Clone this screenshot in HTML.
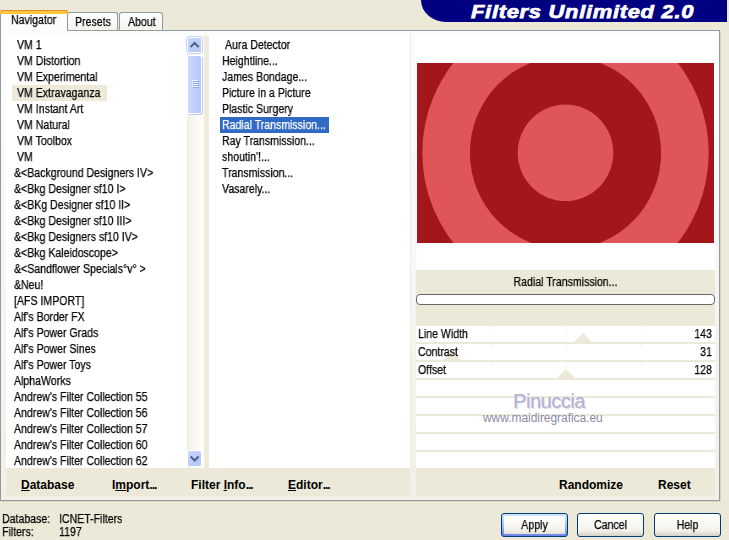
<!DOCTYPE html>
<html><head><meta charset="utf-8">
<style>
*{box-sizing:border-box;margin:0;padding:0}
html,body{width:729px;height:540px;overflow:hidden;background:#ece9d8;font-family:"Liberation Sans",sans-serif;font-size:12.5px;color:#000}
.abs{position:absolute}
.t{position:absolute;display:block;white-space:nowrap;font-size:12.5px;line-height:16px;height:16px;transform:scaleX(0.845);transform-origin:0 0;will-change:transform;-webkit-text-stroke:.25px}
.tr{transform-origin:100% 0}
.tc{transform-origin:50% 0;text-align:center}
#panel{position:absolute;left:0;top:30px;width:720px;height:471px;background:linear-gradient(#fcfcfe,#fcfcfe 8%,#f1efe6);border:1px solid #919b9c;box-shadow:1px 1px 0 #d8d5c5}
.tab{position:absolute;background:linear-gradient(#fefefe,#f4f3ee);border:1px solid #919b9c;border-bottom:none;border-radius:3px 3px 0 0}
#t1{left:0;top:10px;width:68px;height:21px;background:#fcfcfe;border-top:none;z-index:3}
#t1:before{content:"";position:absolute;left:-1px;right:-1px;top:0;height:3px;background:#ffc73c;border-top:1px solid #e68b2c;border-radius:3px 3px 0 0}
#t2{left:67px;top:12px;width:51px;height:18px}
#t3{left:119px;top:12px;width:44px;height:18px}
#banner{position:absolute;left:421px;top:0;width:306px;height:22px;background:#000080;border-bottom-left-radius:25px 22px;color:#fff}
#banner span{position:absolute;left:50px;top:0.5px;-webkit-text-stroke:.75px #fff;font-weight:bold;font-style:italic;font-size:19px;line-height:22px;white-space:nowrap;display:block;transform-origin:0 50%;transform:scaleX(1.155);letter-spacing:.6px}
.white{position:absolute;background:#fff}
.beige{position:absolute;background:#ece9d8}
.b{font-weight:bold;font-size:12px;line-height:14px;position:absolute;top:478px;white-space:nowrap}
.b i{font-style:normal;letter-spacing:-1px}
.btn{position:absolute;top:513px;height:24px;width:67px;border:1px solid #003c74;border-radius:3px;background:linear-gradient(#fff,#f3f2ea 75%,#d6d0c5)}
.row{position:absolute;left:416px;width:299px;height:16px;background:#fff}
.tk{position:absolute;top:0;width:1px;height:4px;background:#ece9d8;opacity:.45}
.tri{position:absolute;width:0;height:0;border-left:9px solid transparent;border-right:9px solid transparent;border-bottom:9px solid #ece9d8;top:7px}
</style></head><body>
<div id="banner"><span>Filters Unlimited 2.0</span></div>
<div id="panel"></div>
<div class="tab" id="t1"><span class="t" style="left:10px;top:2px">Navigator</span></div>
<div class="tab" id="t2"><span class="t" style="left:7px;top:1px">Presets</span></div>
<div class="tab" id="t3"><span class="t" style="left:8px;top:1px">About</span></div>

<div class="white" style="left:6px;top:36px;width:182px;height:432px;overflow:hidden">
<div class="beige" style="left:6px;top:49px;width:95px;height:16px"></div>
<span class="t" style="left:11px;top:1px">VM 1</span>
<span class="t" style="left:11px;top:17px">VM Distortion</span>
<span class="t" style="left:11px;top:33px">VM Experimental</span>
<span class="t" style="left:11px;top:49px">VM Extravaganza</span>
<span class="t" style="left:11px;top:65px">VM Instant Art</span>
<span class="t" style="left:11px;top:81px">VM Natural</span>
<span class="t" style="left:11px;top:97px">VM Toolbox</span>
<span class="t" style="left:11px;top:113px">VM</span>
<span class="t" style="left:8px;top:129px">&amp;&lt;Background Designers IV&gt;</span>
<span class="t" style="left:8px;top:145px">&amp;&lt;Bkg Designer sf10 I&gt;</span>
<span class="t" style="left:8px;top:161px">&amp;&lt;BKg Designer sf10 II&gt;</span>
<span class="t" style="left:8px;top:177px">&amp;&lt;Bkg Designer sf10 III&gt;</span>
<span class="t" style="left:8px;top:193px">&amp;&lt;Bkg Designers sf10 IV&gt;</span>
<span class="t" style="left:8px;top:209px">&amp;&lt;Bkg Kaleidoscope&gt;</span>
<span class="t" style="left:8px;top:225px">&amp;&lt;Sandflower Specials°v° &gt;</span>
<span class="t" style="left:8px;top:241px">&amp;Neu!</span>
<span class="t" style="left:8px;top:257px">[AFS IMPORT]</span>
<span class="t" style="left:8px;top:273px">Alf's Border FX</span>
<span class="t" style="left:8px;top:289px">Alf's Power Grads</span>
<span class="t" style="left:8px;top:305px">Alf's Power Sines</span>
<span class="t" style="left:8px;top:321px">Alf's Power Toys</span>
<span class="t" style="left:8px;top:337px">AlphaWorks</span>
<span class="t" style="left:8px;top:353px">Andrew's Filter Collection 55</span>
<span class="t" style="left:8px;top:369px">Andrew's Filter Collection 56</span>
<span class="t" style="left:8px;top:385px">Andrew's Filter Collection 57</span>
<span class="t" style="left:8px;top:401px">Andrew's Filter Collection 60</span>
<span class="t" style="left:8px;top:417px">Andrew's Filter Collection 62</span>
</div>
<div class="abs" style="left:187px;top:36px;width:17px;height:432px;background:linear-gradient(90deg,#efeee6,#f8f7f3 40%,#fefefc)"></div>
<div class="abs" style="left:187px;top:36px;width:17px;height:18px"><div class="abs" style="left:1px;top:2px;width:13px;height:14px;border-radius:2px;background:linear-gradient(135deg,#c9d7fc,#b3c5f6);box-shadow:0 0 0 1px #fff,0 0 0 2px #c7d3f6"></div>
<svg class="abs" style="left:0;top:0" width="17" height="18" viewBox="0 0 17 18"><path d="M3.6 11 L7.6 7 L11.6 11" fill="none" stroke="#4d6185" stroke-width="2"/></svg></div>
<div class="abs" style="left:187px;top:55px;width:17px;height:59px"><div class="abs" style="left:1px;top:1px;width:13px;height:57px;border-radius:2px;background:linear-gradient(90deg,#cbd8fd,#c0cffa 50%,#b7c8f8);box-shadow:0 0 0 1px #fff,1px 1px 0 1px #b9c8f3"></div>
<div class="abs" style="left:5px;top:25px;width:6px;height:1px;background:#f2f6ff;box-shadow:0 2px 0 #f2f6ff,0 4px 0 #f2f6ff,0 6px 0 #f2f6ff,1px 1px 0 #8fa8ea,1px 3px 0 #8fa8ea,1px 5px 0 #8fa8ea,1px 7px 0 #8fa8ea"></div></div>
<div class="abs" style="left:187px;top:449px;width:17px;height:18px"><div class="abs" style="left:1px;top:2px;width:13px;height:15px;border-radius:2px;background:linear-gradient(135deg,#c9d7fc,#b3c5f6);box-shadow:0 0 0 1px #fff,0 1px 0 0 #8ea8ea"></div>
<svg class="abs" style="left:0;top:0" width="17" height="18" viewBox="0 0 17 18"><path d="M3.6 7.5 L7.6 11.5 L11.6 7.5" fill="none" stroke="#4d6185" stroke-width="2"/></svg></div>
<div class="beige" style="left:204px;top:36px;width:5px;height:432px;background:#eeebdd"></div>

<div class="white" style="left:209px;top:36px;width:201px;height:432px;overflow:hidden">
<div class="abs" style="left:11px;top:81px;width:109px;height:16px;background:#316ac5"></div>
<span class="t" style="left:16px;top:1px">Aura Detector</span>
<span class="t" style="left:13px;top:17px">Heightline...</span>
<span class="t" style="left:13px;top:33px">James Bondage...</span>
<span class="t" style="left:13px;top:49px">Picture in a Picture</span>
<span class="t" style="left:13px;top:65px">Plastic Surgery</span>
<span class="t" style="left:13px;top:81px;color:#fff">Radial Transmission...</span>
<span class="t" style="left:13px;top:97px">Ray Transmission...</span>
<span class="t" style="left:13px;top:113px">shoutin'!...</span>
<span class="t" style="left:13px;top:129px">Transmission...</span>
<span class="t" style="left:13px;top:145px">Vasarely...</span>
</div>
<div class="abs" style="left:410px;top:33px;width:1px;height:436px;background:#eeecdf"></div>
<div class="white" style="left:416px;top:36px;width:299px;height:234px"></div>
<svg class="abs" style="left:417px;top:63px" width="297" height="180" viewBox="0 0 297 180"><rect width="297" height="180" fill="#a3161a"/><ellipse cx="148.5" cy="89.8" rx="143.2" ry="144.6" fill="#e05558"/><ellipse cx="148.5" cy="89.8" rx="95.6" ry="96.5" fill="#a3161a"/><ellipse cx="148.5" cy="89.8" rx="47.8" ry="48.3" fill="#e05558"/></svg>
<div class="beige" style="left:416px;top:270px;width:299px;height:200px"></div>
<span class="t tc" style="left:416px;width:299px;top:274px">Radial Transmission...</span>
<div class="abs" style="left:416px;top:294px;width:299px;height:11px;background:#fff;border:1px solid #686868;border-radius:4px"></div>

<div class="row" style="top:326px">
<div class="tri" style="left:158.4px"></div>
<div class="tk" style="left:76px"></div><div class="tk" style="left:150px;height:7px"></div><div class="tk" style="left:225px"></div>
<span class="t" style="left:2px;top:0">Line Width</span><span class="t tr" style="right:3px;top:0">143</span>
</div>
<div class="row" style="top:344px">
<div class="tri" style="left:26.7px"></div>
<div class="tk" style="left:76px"></div><div class="tk" style="left:150px;height:7px"></div><div class="tk" style="left:225px"></div>
<span class="t" style="left:2px;top:0">Contrast</span><span class="t tr" style="right:3px;top:0">31</span>
</div>
<div class="row" style="top:362px">
<div class="tri" style="left:141.0px"></div>
<div class="tk" style="left:76px"></div><div class="tk" style="left:150px;height:7px"></div><div class="tk" style="left:225px"></div>
<span class="t" style="left:2px;top:0">Offset</span><span class="t tr" style="right:3px;top:0">128</span>
</div>
<div class="row" style="top:380px">
</div>
<div class="row" style="top:398px">
</div>
<div class="row" style="top:416px">
</div>
<div class="row" style="top:434px">
</div>
<div class="row" style="top:452px">
</div>
<div class="abs" style="left:513px;top:389px;white-space:nowrap;font-size:20px;line-height:24px;color:#b3b1d0;letter-spacing:-.45px;text-shadow:1px 1px 0 #dddced">Pinuccia</div>
<div class="abs" style="left:483px;top:411px;white-space:nowrap;font-size:12px;line-height:14px;color:#8d8ba6;letter-spacing:-.05px">www.maidiregrafica.eu</div>

<div class="beige" style="left:6px;top:468px;width:404px;height:28px"></div>
<div class="beige" style="left:416px;top:468px;width:299px;height:28px"></div>
<div class="b" style="left:21px"><u>D</u>atabase</div>
<div class="b" style="left:112px">I<u>m</u>port<i>...</i></div>
<div class="b" style="left:191px">Filter <u>I</u>nfo<i>...</i></div>
<div class="b" style="left:288px"><u>E</u>ditor<i>...</i></div>
<div class="b" style="left:559px">Randomize</div>
<div class="b" style="left:658px">Reset</div>
<span class="t" style="left:2px;top:511px">Database:</span>
<span class="t" style="left:59px;top:511px">ICNET-Filters</span>
<span class="t" style="left:2px;top:524px">Filters:</span>
<span class="t" style="left:59px;top:524px">1197</span>
<div class="btn" style="left:501px;background:linear-gradient(#cee7ff,#a9c4f2 50%,#6982ee)"><div class="abs" style="left:2px;top:2px;right:2px;bottom:2px;border-radius:1px;background:linear-gradient(#fff,#f3f2ea 75%,#e3dfd3)"></div><span class="t tc" style="left:0;width:65px;top:3px">Apply</span></div>
<div class="btn" style="left:577px"><span class="t tc" style="left:0;width:65px;top:3px">Cancel</span></div>
<div class="btn" style="left:654px"><span class="t tc" style="left:0;width:65px;top:3px">Help</span></div>
</body></html>
